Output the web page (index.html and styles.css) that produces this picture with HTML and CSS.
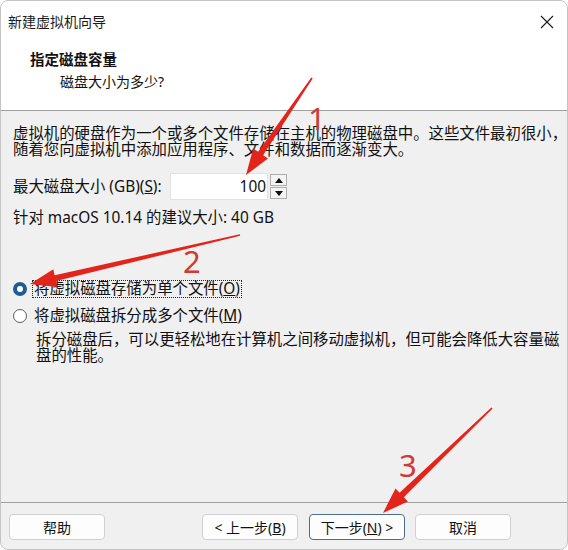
FILE: index.html
```html
<!DOCTYPE html>
<html lang="zh-CN">
<head>
  <meta charset="UTF-8">
  <title>新建虚拟机向导</title>
  <link rel="stylesheet" href="styles.css">
</head>
<body>

<div class="window">
  <div class="titlebar">
    <span class="title">新建虚拟机向导</span>
    <svg class="close" width="14" height="14" viewBox="0 0 14 14">
      <path d="M1 1 L13 13 M13 1 L1 13" stroke="#1a1a1a" stroke-width="1.1" fill="none"/>
    </svg>
  </div>

  <div class="header">
    <div class="header-title">指定磁盘容量</div>
    <div class="header-sub">磁盘大小为多少?</div>
  </div>

  <div class="content">
    <p class="intro">虚拟机的硬盘作为一个或多个文件存储在主机的物理磁盘中。这些文件最初很小，<br>随着您向虚拟机中添加应用程序、文件和数据而逐渐变大。</p>

    <div class="size-row">
      <label>最大磁盘大小 (GB)(<u>S</u>):</label>
      <div class="size-input">100</div>
      <div class="spin">
        <div class="spin-btn"><span class="tri-up"></span></div>
        <div class="spin-btn"><span class="tri-down"></span></div>
      </div>
    </div>

    <p class="recommend">针对 macOS 10.14 的建议大小: 40 GB</p>

    <div class="radio-row first">
      <span class="radio checked"></span>
      <span class="radio-label focus">将虚拟磁盘存储为单个文件(<u>O</u>)</span>
    </div>
    <div class="radio-row">
      <span class="radio"></span>
      <span class="radio-label">将虚拟磁盘拆分成多个文件(<u>M</u>)</span>
    </div>
    <p class="radio-desc">拆分磁盘后，可以更轻松地在计算机之间移动虚拟机，但可能会降低大容量磁<br>盘的性能。</p>
  </div>

  <div class="footer">
    <button class="btn help">帮助</button>
    <button class="btn back">&lt; 上一步(<u>B</u>)</button>
    <button class="btn next">下一步(<u>N</u>) &gt;</button>
    <button class="btn">取消</button>
  </div>

  <!-- red annotation arrows on top of the dialog -->
  <svg class="marks" width="568" height="550" viewBox="0 0 568 550">
    <g fill="#e3241b">
      <polygon points="312.7,78.5 263.1,155.2 268,158.6 246,175 253.2,148.4 258.1,151.8 311.3,77.5"/>
      <polygon points="240.2,235.8 56,281 57.3,286.9 30,284 53.3,269.3 54.6,275.2 239.8,234.2"/>
      <polygon points="492.6,408.6 403.8,497.2 407.9,501.5 383,513 395.5,488.5 399.6,492.8 491.4,407.4"/>
    </g>
    <g class="num" fill="#cf3a35">
      <text x="308" y="130">1</text>
      <text x="183" y="273">2</text>
      <text x="399" y="477">3</text>
    </g>
  </svg>
</div>

</body>
</html>
```

FILE: styles.css
```css
html, body {
  margin: 0;
  padding: 0;
  background: #ffffff;
}

body {
  font-family: "Noto Sans", "Noto Sans CJK SC", sans-serif;
  color: #111;
}

.window {
  position: relative;
  width: 568px;
  height: 550px;
  box-sizing: border-box;
  border: 1px solid #c4c4c4;
  border-radius: 8px;
  overflow: hidden;
  display: flex;
  flex-direction: column;
  background: #f0f0f0;
}

.titlebar {
  height: 39px;
  background: #fff;
  display: flex;
  align-items: center;
  justify-content: space-between;
  padding: 0 13px 0 7px;
}

.title {
  font-size: 14px;
  color: #1a1a1a;
}

.close {
  margin-top: 2px;
}

.header {
  height: 70px;
  background: #fff;
  border-bottom: 1px solid #a0a0a0;
  padding-left: 29px;
}

.header-title {
  font-size: 14.5px;
  font-weight: bold;
  line-height: 18px;
  margin-top: 10px;
}

.header-sub {
  font-size: 14px;
  line-height: 18px;
  margin-top: 5px;
  padding-left: 30px;
}

.content {
  flex: 1;
  padding: 15px 0 0 12px;
  font-size: 15.4px;
  line-height: 16px;
  white-space: nowrap;
}

.content p {
  margin: 0;
}

.size-row {
  display: flex;
  align-items: center;
  margin-top: 15px;
  height: 27px;
}

.size-row label {
  width: 157px;
}

.size-input {
  width: 98px;
  height: 27px;
  box-sizing: border-box;
  background: #fff;
  border: 1px solid #e2e2e2;
  text-align: right;
  line-height: 25px;
  padding-right: 1px;
}

.spin {
  display: flex;
  flex-direction: column;
  gap: 1px;
  margin-left: 2px;
}

.spin-btn {
  width: 17px;
  height: 12px;
  box-sizing: border-box;
  border: 1px solid #adadad;
  background: #f4f4f4;
  display: flex;
  align-items: center;
  justify-content: center;
}

.tri-up {
  border-left: 4px solid transparent;
  border-right: 4px solid transparent;
  border-bottom: 5px solid #111;
}

.tri-down {
  border-left: 4px solid transparent;
  border-right: 4px solid transparent;
  border-top: 5px solid #111;
}

.recommend {
  margin-top: 10px !important;
}

.radio-row {
  display: flex;
  align-items: center;
  height: 18px;
  margin-top: 9px;
}

.radio-row.first {
  margin-top: 54px;
}

.radio {
  width: 14px;
  height: 14px;
  box-sizing: border-box;
  border-radius: 50%;
  border: 1px solid #5c5c5c;
  background: #fff;
  margin-right: 5px;
}

.radio.checked {
  border: 4px solid #1f5c94;
  background: #fff;
}

.radio-label {
  padding: 0 1px;
  line-height: 16px;
  border: 1px dotted transparent;
}

.radio-label.focus {
  border-color: #222;
}

.radio-desc {
  margin-top: 7px !important;
  padding-left: 23px;
}

.footer {
  height: 47px;
  box-sizing: border-box;
  border-top: 1px solid #a0a0a0;
  display: flex;
  align-items: flex-start;
  padding: 11px 0 0 8px;
}

.btn {
  width: 96px;
  height: 26px;
  box-sizing: border-box;
  background: #fdfdfd;
  border: 1px solid #d0d0d0;
  border-radius: 4px;
  font-family: "Noto Sans", "Noto Sans CJK SC", sans-serif;
  font-size: 14px;
  color: #111;
  padding: 0;
  margin-right: 10px;
}

.btn.help {
  margin-right: 97px;
}

.btn.back {
  margin-right: 11px;
}

.btn.next {
  border-color: #4b6d8e;
}

.marks {
  position: absolute;
  left: -1px;
  top: -1px;
  pointer-events: none;
}

.num text {
  font-family: "Noto Sans", sans-serif;
  font-size: 31px;
}
```
